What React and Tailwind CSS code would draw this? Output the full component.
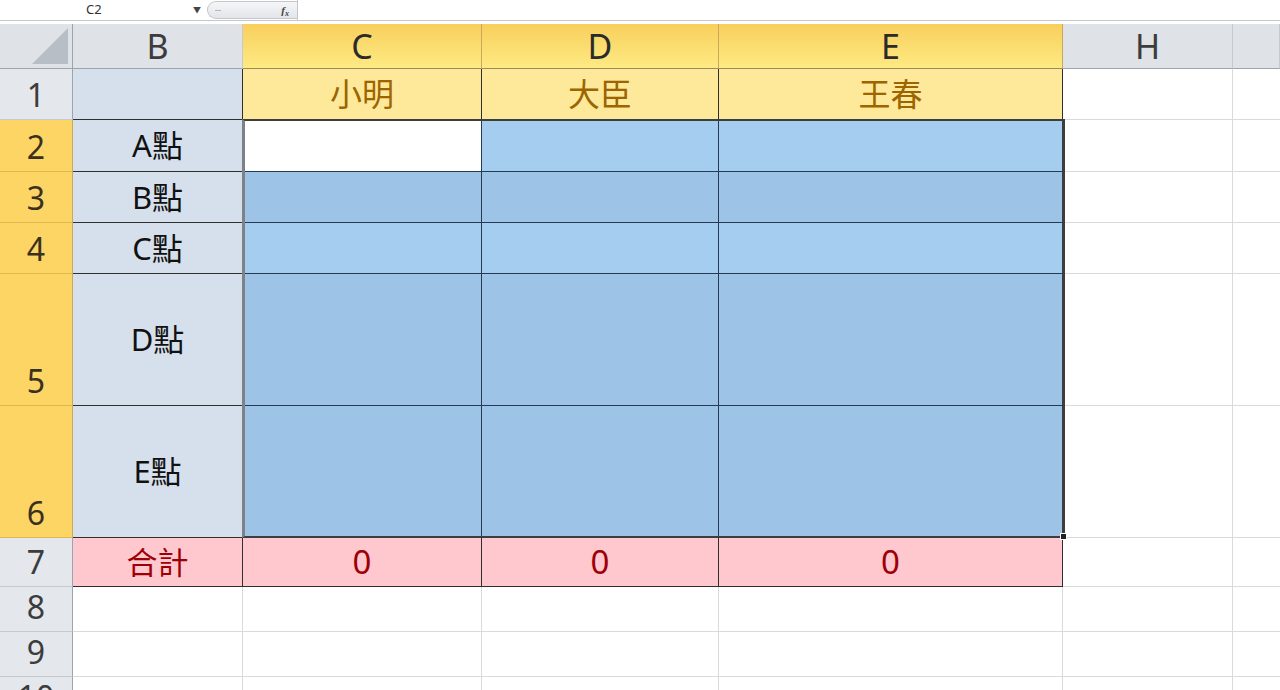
import React from 'react';

const FONT = { fontFamily: '"Noto Sans", "Noto Sans CJK TC", sans-serif' };

const cols = ['B', 'C', 'D', 'E', 'H', ''];
const selectedCols = ['C', 'D', 'E'];

// row number, height class, row header selected?
const rows = [
  { n: 1, h: 'h-[51px]' },
  { n: 2, h: 'h-[52px]', sel: true },
  { n: 3, h: 'h-[51px]', sel: true },
  { n: 4, h: 'h-[51px]', sel: true },
  { n: 5, h: 'h-[132px]', sel: true },
  { n: 6, h: 'h-[132px]', sel: true },
  { n: 7, h: 'h-[49px]' },
  { n: 8, h: 'h-[45px]' },
  { n: 9, h: 'h-[45px]' },
  { n: 10, h: 'h-[45px]' },
];

const names = { 2: 'A點', 3: 'B點', 4: 'C點', 5: 'D點', 6: 'E點' };
const people = ['小明', '大臣', '王春'];

function FormulaBar() {
  return (
    <div className="flex h-[21px] border-b border-[#c4c8cd] bg-white">
      <div className="flex w-[207px] items-center text-[13px] text-[#333]">
        <span className="ml-[86px]">C2</span>
        <span className="ml-auto mr-[6px] text-[8px] text-[#444]">▼</span>
      </div>
      <div className="my-[1px] flex w-[90px] items-center rounded-l-full border border-r-0 border-[#c3c7cc] bg-gradient-to-b from-[#f5f6f8] to-[#e2e5e9]">
        <span className="ml-[7px] h-[1px] w-[6px] bg-[#b4b8be]" />
        <span className="ml-auto mr-[8px] text-[11px] font-bold italic text-[#444]" style={{ fontFamily: '"Liberation Serif", serif' }}>
          f<sub className="text-[8px]">x</sub>
        </span>
      </div>
      <div className="w-[1px] bg-[#c3c7cc]" />
      <div className="flex-1" />
    </div>
  );
}

function ColumnHeaders() {
  return (
    <div className="flex h-[45px]">
      <div className="relative w-[73px] border-r border-b border-[#9ea4ab] bg-[#dfe3e8]">
        <div
          className="absolute bottom-[4px] right-[4px] h-0 w-0"
          style={{ borderBottom: '36px solid #b8bec5', borderLeft: '36px solid transparent' }}
        />
      </div>
      {cols.map((c, i) => {
        const sel = selectedCols.includes(c);
        const w = ['w-[170px]', 'w-[239px]', 'w-[237px]', 'w-[344px]', 'w-[170px]', 'flex-1'][i];
        return (
          <div
            key={i}
            className={`${w} flex items-center justify-center border-r border-b text-[34px] ${
              sel
                ? 'border-r-[#c9a857] border-b-[#9c8a5a] bg-gradient-to-b from-[#f8cf5c] to-[#feea83] text-[#2b2b2b]'
                : 'border-r-[#c5cad0] border-b-[#9ea4ab] bg-[#dfe3e8] text-[#3c3c3c]'
            }`}
          >
            {c}
          </div>
        );
      })}
    </div>
  );
}

function Row({ r }) {
  const n = r.n;
  const header = (
    <div
      className={`flex w-[73px] items-end justify-center border-r border-b pb-[2px] text-[32px] leading-[44px] ${
        r.sel
          ? 'border-r-[#c9a857] border-b-[#e0b850] bg-[#fdd564] text-[#3a3020]'
          : 'border-r-[#9ea4ab] border-b-[#c5cad0] bg-[#e4e7ec] text-[#3c3c3c]'
      }`}
    >
      {n}
    </div>
  );

  // column B
  let bCell;
  if (n === 1) bCell = <div className="w-[170px] border-r border-b border-[#2f2f2f] bg-[#d5e0ec]" />;
  else if (names[n])
    bCell = (
      <div className="flex w-[170px] items-center justify-center border-r border-b border-[#2f2f2f] bg-[#d5e0ec] text-[31px] text-[#111]">
        {names[n]}
      </div>
    );
  else if (n === 7)
    bCell = (
      <div className="flex w-[170px] items-center justify-center border-r border-b border-[#2f2f2f] bg-[#ffc7ce] text-[31px] text-[#9c0006]">
        合計
      </div>
    );
  else bCell = <div className="w-[170px] border-r border-b border-[#dadada] bg-white" />;

  const widths = ['w-[239px]', 'w-[237px]', 'w-[344px]'];
  const light = n === 2 || n === 4;
  const dataCells = widths.map((w, i) => {
    if (n === 1)
      return (
        <div key={i} className={`${w} flex items-center justify-center border-r border-b border-[#2f2f2f] bg-[#fee99b] text-[32px] text-[#9c6500]`}>
          {people[i]}
        </div>
      );
    if (n >= 2 && n <= 6) {
      const bg = n === 2 && i === 0 ? 'bg-white' : light ? 'bg-[#a5cdf0]' : 'bg-[#9dc3e6]';
      return <div key={i} className={`${w} border-r border-b border-[#243a55] ${bg}`} />;
    }
    if (n === 7)
      return (
        <div key={i} className={`${w} flex items-center justify-center border-r border-b border-[#2f2f2f] bg-[#ffc7ce] text-[33px] text-[#9c0006]`}>
          0
        </div>
      );
    return <div key={i} className={`${w} border-r border-b border-[#dadada] bg-white`} />;
  });

  return (
    <div className={`flex ${r.h}`}>
      {header}
      {bCell}
      {dataCells}
      <div className="w-[170px] border-r border-b border-[#dadada] bg-white" />
      <div className="flex-1 border-b border-[#dadada] bg-white" />
    </div>
  );
}

export default function App() {
  return (
    <div className="h-[690px] w-[1280px] overflow-hidden bg-white" style={FONT}>
      <FormulaBar />
      <div className="h-[3px] bg-white" />
      <div className="relative">
        <ColumnHeaders />
        {rows.map((r) => (
          <Row key={r.n} r={r} />
        ))}
        {/* selection outline C2:E6 */}
        <div className="pointer-events-none absolute left-[242px] top-[95px] h-[419px] w-[823px] border-2 border-r-[3px] border-l-[3px] border-[#3d3d3d] border-l-[#7d8288]">
          <div className="absolute -bottom-[4px] -right-[5px] h-[7px] w-[7px] border border-white bg-[#222]" />
        </div>
      </div>
    </div>
  );
}
